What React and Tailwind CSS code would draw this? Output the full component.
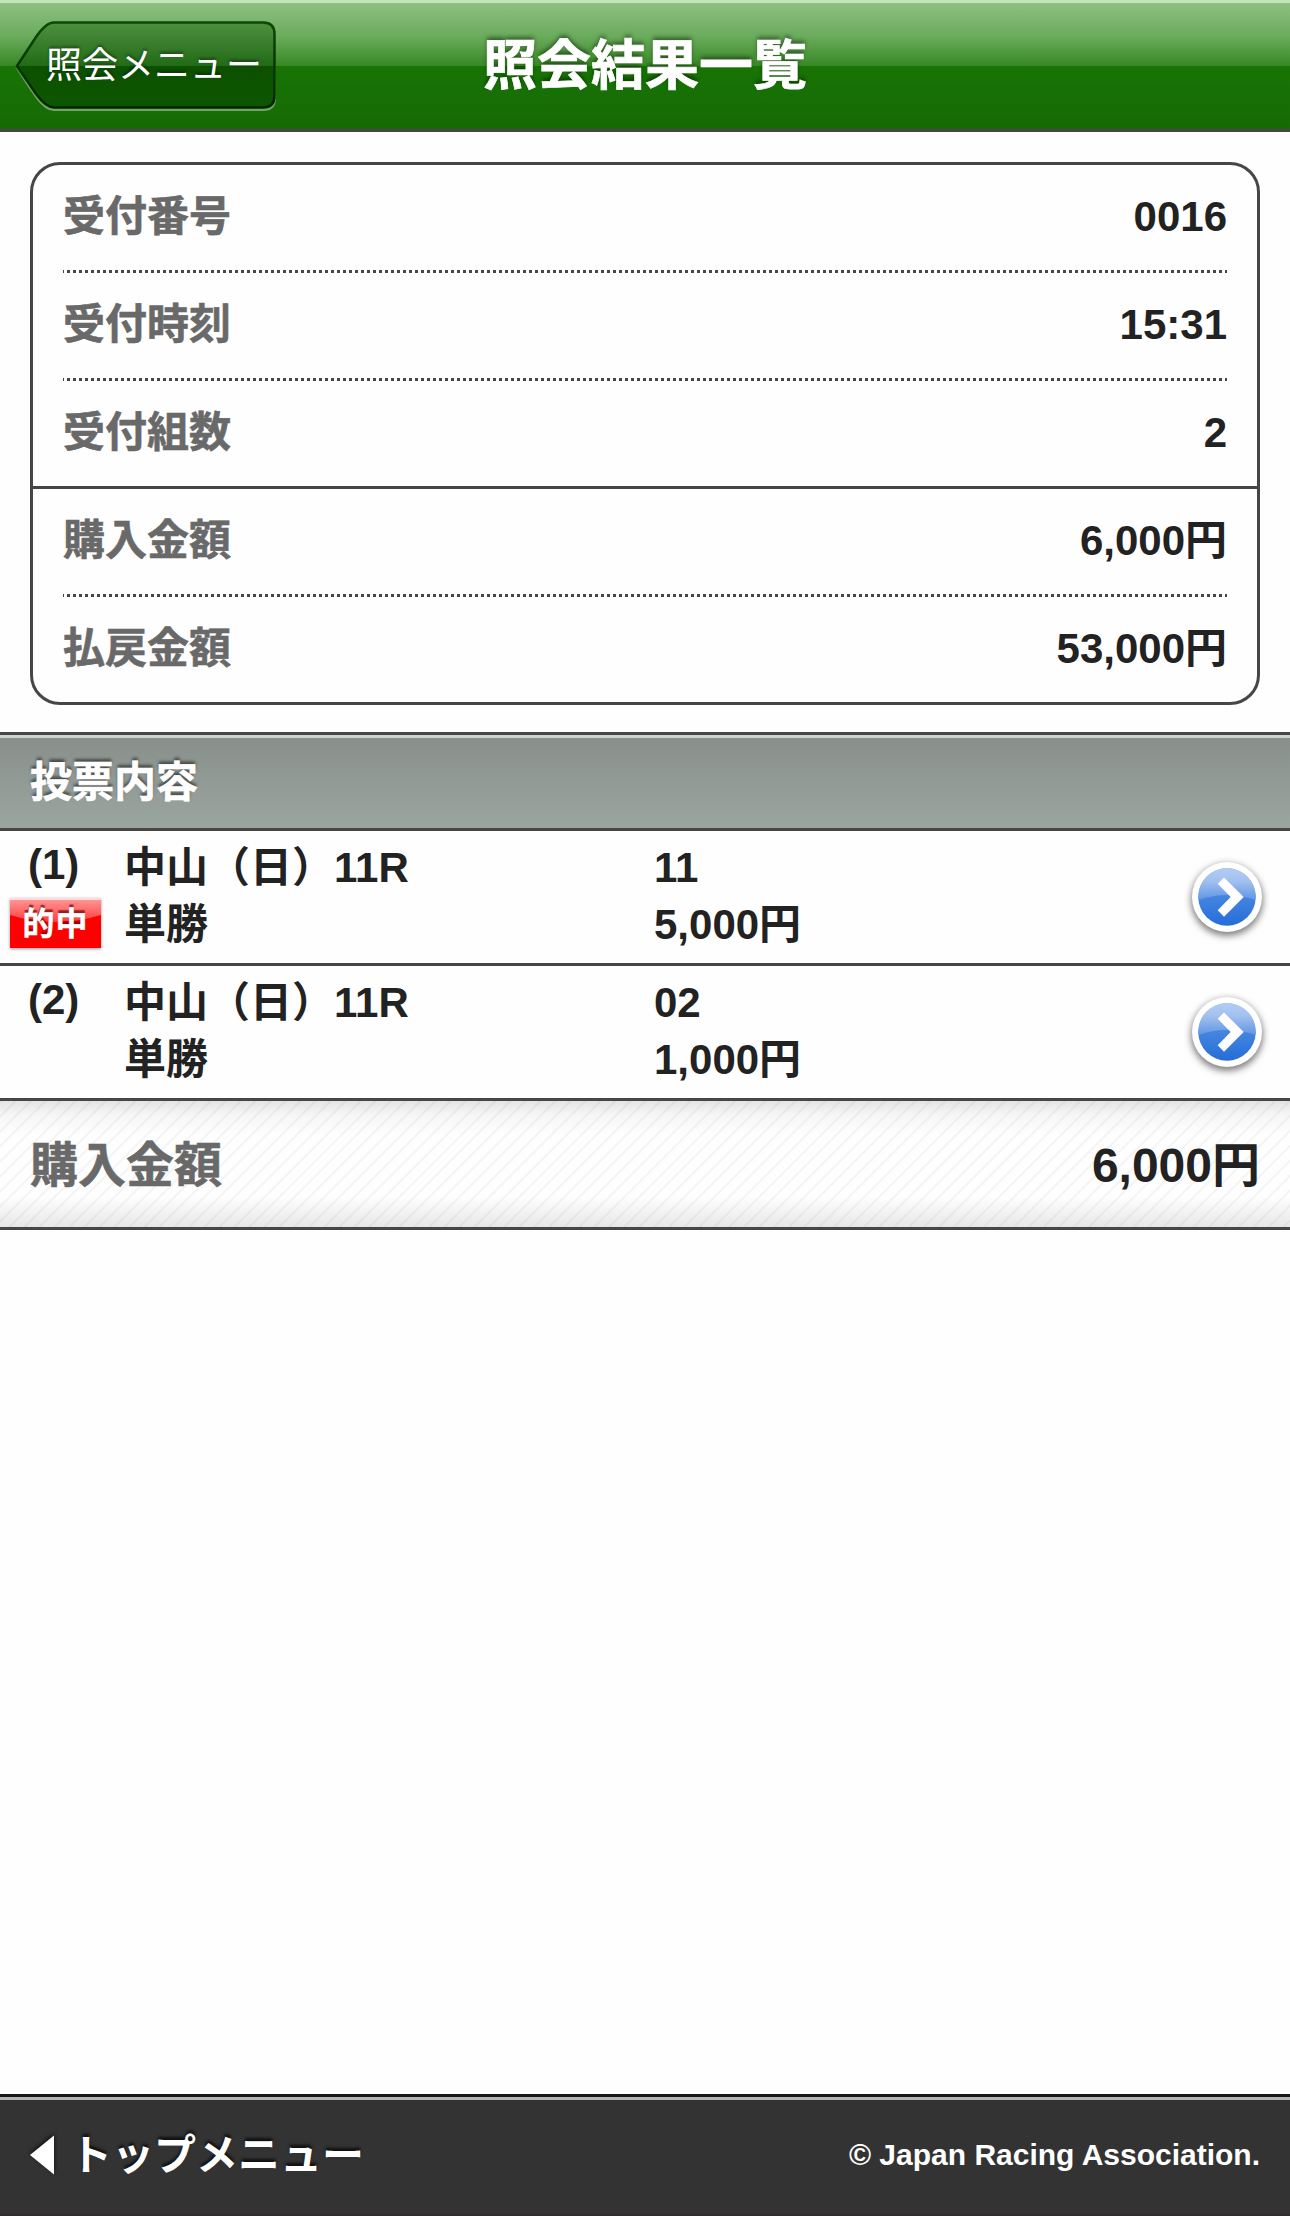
const receipt = [
  { label: "受付番号", value: "0016", line: "dotted" },
  { label: "受付時刻", value: "15:31", line: "dotted" },
  { label: "受付組数", value: "2", line: "solid" },
  { label: "購入金額", value: "6,000円", line: "dotted" },
  { label: "払戻金額", value: "53,000円", line: "none" },
];

const bets = [
  { no: 1, race: "中山（日）11R", type: "単勝", horse: "11", amount: "5,000円", hit: true },
  { no: 2, race: "中山（日）11R", type: "単勝", horse: "02", amount: "1,000円", hit: false },
];

function BackButton() {
  const shape =
    "M17 66 L36 37 Q46 22.5 54 22.5 H263 Q274.5 22.5 274.5 34 V96 Q274.5 107.5 263 107.5 H54 Q46 107.5 36 94 Z";

  return (
    <button className="relative flex h-[126px] w-[290px] items-center pl-[46px] pb-px">
      <svg className="absolute left-0 -top-[3px]" width="290" height="129" viewBox="0 0 290 129">
        <defs>
          <linearGradient id="backFill" x1="0" y1="22" x2="0" y2="108" gradientUnits="userSpaceOnUse">
            <stop offset="0" stopColor="#4f9040" />
            <stop offset="0.51" stopColor="#226b17" />
            <stop offset="0.51" stopColor="#0c5000" />
            <stop offset="1" stopColor="#0d5600" />
          </linearGradient>
          <linearGradient id="backEdge" x1="0" y1="22" x2="0" y2="108" gradientUnits="userSpaceOnUse">
            <stop offset="0" stopColor="#0b4904" />
            <stop offset="1" stopColor="#022600" />
          </linearGradient>
          <linearGradient id="backGlow" x1="0" y1="22" x2="0" y2="108" gradientUnits="userSpaceOnUse">
            <stop offset="0.4" stopColor="#74a565" stopOpacity="0" />
            <stop offset="0.7" stopColor="#74a565" />
          </linearGradient>
        </defs>
        <path d={shape} transform="translate(0 2)" fill="none" stroke="url(#backGlow)" strokeWidth="3" />
        <path d={shape} fill="url(#backFill)" stroke="url(#backEdge)" strokeWidth="2.5" />
      </svg>
      <span className="relative whitespace-nowrap text-[36px] leading-none text-white [text-shadow:0_-2px_3px_rgba(0,0,0,0.4)]">
        照会メニュー
      </span>
    </button>
  );
}

function Header() {
  return (
    <header className="grid h-[132px] grid-cols-[290px_1fr_290px] border-t-[3px] border-b-[3px] border-t-[#c3e3bb] border-b-[#484448] bg-[linear-gradient(to_bottom,#8dc081_0%,#6bac5d_26%,#388824_50%,#187404_50%,#166a06_100%)]">
      <BackButton />
      <h1 className="flex items-center justify-center pb-px text-[54px] leading-none font-bold text-white [-webkit-text-stroke:0.7px_#fff] [text-shadow:0_-3px_4px_rgba(0,0,0,0.45)]">
        照会結果一覧
      </h1>
    </header>
  );
}

function Line({ type }) {
  if (type === "solid") return <div className="h-[3px] bg-[#464646]" />;
  if (type === "dotted") {
    return (
      <div className="mx-[30px] h-[3px] bg-[repeating-linear-gradient(90deg,#464646_0_1px,transparent_1px_4px,#464646_4px_6px)]" />
    );
  }
  return null;
}

function HitBadge() {
  return (
    <div className="relative flex h-[50px] w-[91px] items-center justify-center shadow-[0_1px_3px_rgba(0,0,0,0.4)]">
      <svg className="absolute inset-0" width="91" height="50" viewBox="0 0 91 50">
        <defs>
          <linearGradient id="gloss" x1="0" y1="0" x2="0" y2="1">
            <stop offset="0" stopColor="#ff9c9c" />
            <stop offset="1" stopColor="#ff3c3c" />
          </linearGradient>
        </defs>
        <rect width="91" height="50" fill="#fe0000" />
        <path d="M0 0 H91 V17 Q45.5 31 0 17 Z" fill="url(#gloss)" />
        <rect width="91" height="2" fill="#ffdcdc" />
      </svg>
      <span className="relative pt-px text-[32px] leading-none font-bold tracking-[1px] text-white [-webkit-text-stroke:0.5px_#fff] [text-shadow:0_-3px_1px_rgba(110,0,0,0.7)]">
        的中
      </span>
    </div>
  );
}

function DetailButton() {
  return (
    <button className="size-[70px] rounded-full bg-white shadow-[0_3px_7px_1px_rgba(0,0,0,0.5)]">
      <svg width="70" height="70" viewBox="-35 -35 70 70">
        <defs>
          <linearGradient id="blue" x1="0" y1="0" x2="0" y2="1">
            <stop offset="0.35" stopColor="#4f8ce0" />
            <stop offset="1" stopColor="#246dd9" />
          </linearGradient>
          <linearGradient id="shine" x1="0" y1="0" x2="0" y2="1">
            <stop offset="0" stopColor="#b3ccf3" />
            <stop offset="0.4" stopColor="#a3c1ef" />
            <stop offset="1" stopColor="#5f95e4" />
          </linearGradient>
        </defs>
        <circle r="28.7" fill="url(#blue)" />
        <path d="M-28.5 3 A28.7 28.7 0 1 1 28.5 3 Q0 -7 -28.5 3 Z" fill="url(#shine)" />
        <path d="M-3 -19.5 L16.7 0 L-3 19.7 L-9.3 13.3 L3.7 0 L-9.3 -13.3 Z" fill="#fff" />
      </svg>
    </button>
  );
}

function Bet({ bet }) {
  return (
    <li className="flex h-[135px] border-b-[3px] border-[#464646]">
      <div className="w-[124px] pt-[5px]">
        <div className="pl-7 leading-[57px]">({bet.no})</div>
        {bet.hit && (
          <div className="pl-[10px] pt-[5px]">
            <HitBadge />
          </div>
        )}
      </div>
      <div className="w-[530px] pt-2 leading-[57px]">
        <div>{bet.race}</div>
        <div>{bet.type}</div>
      </div>
      <div className="flex-1 pt-2 leading-[57px]">
        <div>{bet.horse}</div>
        <div>{bet.amount}</div>
      </div>
      <div className="flex items-center pr-7">
        <DetailButton />
      </div>
    </li>
  );
}

function Footer() {
  return (
    <footer className="flex h-[122px] items-center justify-between border-t-[3px] border-b-2 border-t-[#17171a] border-b-[#322c2f] bg-[#333] px-[30px] pb-px font-bold text-white shadow-[inset_0_3px_0_#b4b4b4]">
      <a className="flex items-center gap-4">
        <svg
          className="drop-shadow-[0_-2px_2px_rgba(0,0,0,0.7)]"
          width="24"
          height="40"
          viewBox="0 0 24 40"
          fill="#fff"
        >
          <path d="M0 20 L24 0.5 V39.5 Z" />
        </svg>
        <span className="pt-px text-[42px] leading-none [text-shadow:0_-3px_3px_rgba(0,0,0,0.7)]">トップメニュー</span>
      </a>
      <small className="text-3xl leading-none">© Japan Racing Association.</small>
    </footer>
  );
}

export default function App() {
  return (
    <div className="flex min-h-screen w-full flex-col bg-[#fefefe] font-['Liberation_Sans','Noto_Sans_CJK_JP',sans-serif] text-[#222]">
      <Header />
      <main className="flex-1 text-[42px] font-bold">
        <dl className="mx-[30px] mt-[30px] mb-[27px] rounded-[30px] border-[3px] border-[#464646]">
          {receipt.map((row) => (
            <div key={row.label}>
              <div className="flex h-[105px] items-center justify-between px-[30px] pb-[2px] leading-none">
                <dt className="text-[#696969] [-webkit-text-stroke:0.6px_#696969]">{row.label}</dt>
                <dd>{row.value}</dd>
              </div>
              <Line type={row.line} />
            </div>
          ))}
        </dl>

        <h2 className="flex h-[99px] items-center border-y-[3px] border-[#464646] bg-linear-to-b from-[#888f8a] to-[#9ba5a0] px-[30px] pt-[3px] leading-none text-white shadow-[inset_0_3px_0_#cbd5d0] [-webkit-text-stroke:0.6px_#fff] [text-shadow:0_-3px_3px_rgba(0,0,0,0.5)]">
          投票内容
        </h2>
        <ul>
          {bets.map((bet) => (
            <Bet key={bet.no} bet={bet} />
          ))}
        </ul>

        <div className="flex h-[129px] items-center justify-between border-b-[3px] border-[#464646] bg-[linear-gradient(to_bottom,rgba(0,0,0,0.1)_0,rgba(0,0,0,0.03)_14px,transparent_34px,transparent_96px,rgba(0,0,0,0.09)_126px),repeating-linear-gradient(135deg,#f4f4f4_0_1px,#fefefe_2px_9.6px,#f4f4f4_10.6px)] px-[30px] pt-[3px] text-[48px] leading-none">
          <span className="text-[#696969] [-webkit-text-stroke:0.6px_#696969]">購入金額</span>
          <span>6,000円</span>
        </div>
      </main>
      <Footer />
    </div>
  );
}
